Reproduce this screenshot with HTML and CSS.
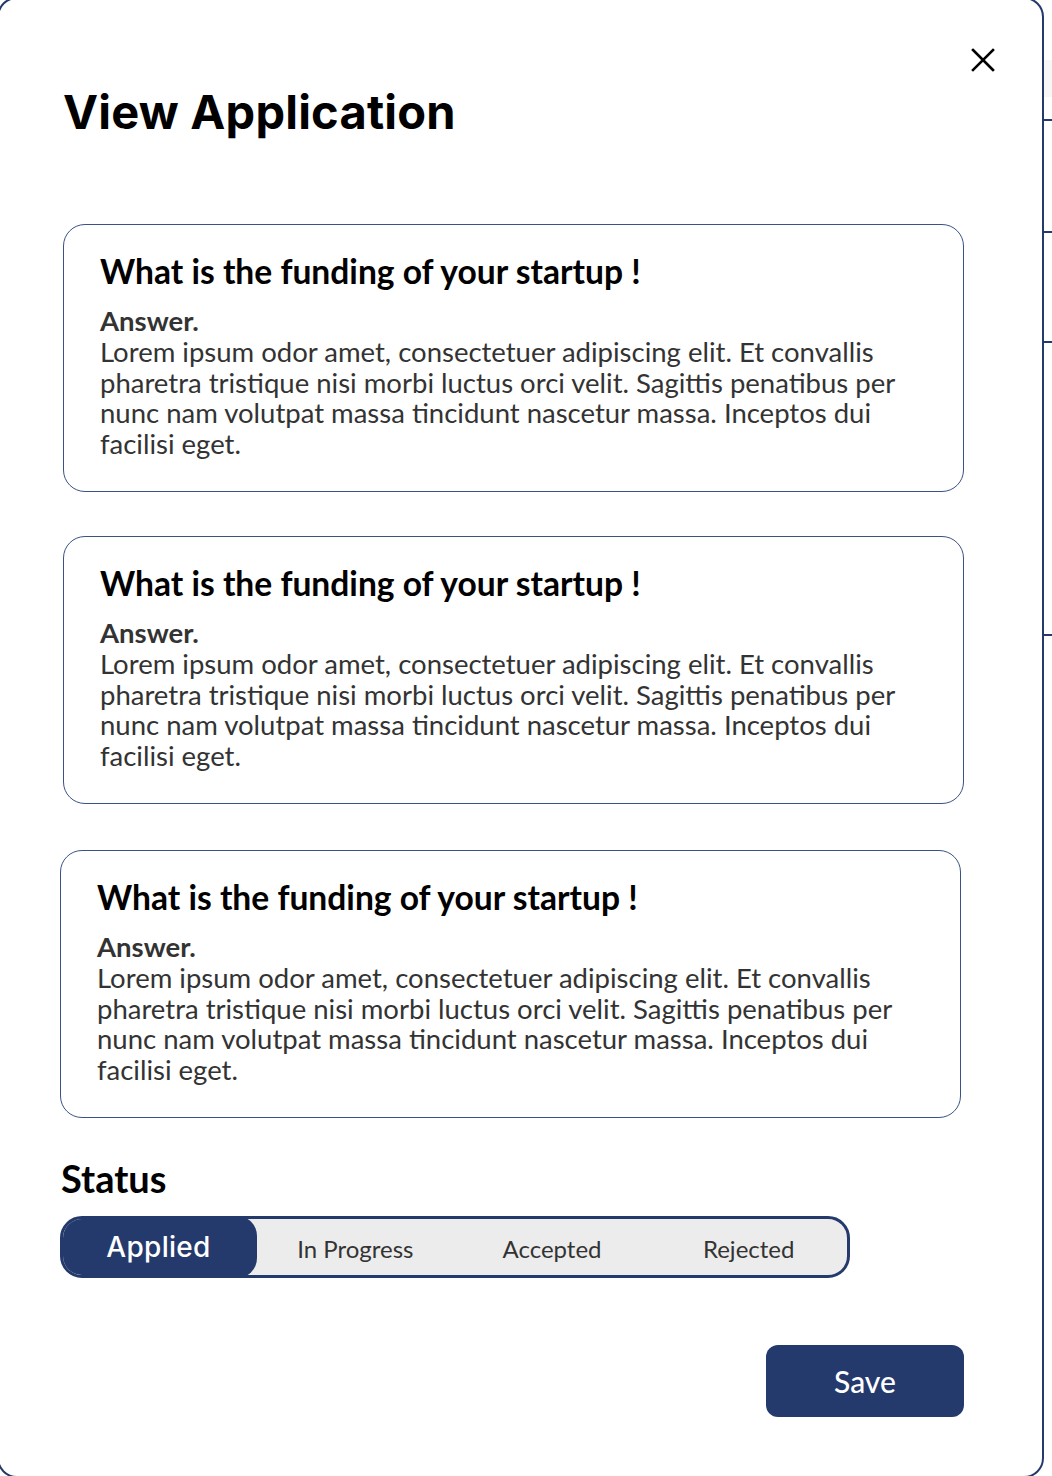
FILE: index.html
```html
<!DOCTYPE html>
<html lang="en">
<head>
<meta charset="utf-8">
<title>View Application</title>
<link rel="stylesheet" href="styles.css">
</head>
<body>
<div class="page">
  <div class="modal">
    <div class="modal-header">
      <h1 class="modal-title">View Application</h1>
      <button class="close-btn" aria-label="Close">
        <svg width="24" height="24" viewBox="0 0 24 24" fill="none" stroke="#000" stroke-width="2.6" stroke-linecap="square">
          <path d="M2 2 L22 22 M22 2 L2 22"/>
        </svg>
      </button>
    </div>

    <div class="cards">
      <div class="card">
        <h2 class="question">What is the funding of your startup !</h2>
        <div class="answer-label">Answer.</div>
        <p class="answer">Lorem ipsum odor amet, consectetuer adipiscing elit. Et convallis pharetra tristique nisi morbi luctus orci velit. Sagittis penatibus per nunc nam volutpat massa tincidunt nascetur massa. Inceptos dui facilisi eget.</p>
      </div>
      <div class="card">
        <h2 class="question">What is the funding of your startup !</h2>
        <div class="answer-label">Answer.</div>
        <p class="answer">Lorem ipsum odor amet, consectetuer adipiscing elit. Et convallis pharetra tristique nisi morbi luctus orci velit. Sagittis penatibus per nunc nam volutpat massa tincidunt nascetur massa. Inceptos dui facilisi eget.</p>
      </div>
      <div class="card card-shift">
        <h2 class="question">What is the funding of your startup !</h2>
        <div class="answer-label">Answer.</div>
        <p class="answer">Lorem ipsum odor amet, consectetuer adipiscing elit. Et convallis pharetra tristique nisi morbi luctus orci velit. Sagittis penatibus per nunc nam volutpat massa tincidunt nascetur massa. Inceptos dui facilisi eget.</p>
      </div>
    </div>

    <h3 class="status-title">Status</h3>
    <div class="segmented">
      <div class="seg seg-active">Applied</div>
      <div class="seg">In Progress</div>
      <div class="seg">Accepted</div>
      <div class="seg">Rejected</div>
    </div>

    <div class="actions">
      <button class="save-btn">Save</button>
    </div>
  </div>

  <div class="backdrop-strip">
    <div class="strip-block"></div>
    <div class="strip-tick tick-1"></div>
    <div class="strip-tick tick-2"></div>
    <div class="strip-tick tick-3"></div>
    <div class="strip-tick tick-4"></div>
  </div>
</div>
</body>
</html>
```

FILE: styles.css
```css
* { box-sizing: border-box; }

html, body {
  margin: 0;
  padding: 0;
  background: #ffffff;
  overflow: hidden;
}

body {
  width: 1052px;
  height: 1476px;
  font-family: "Lato", "Open Sans", sans-serif;
  color: #000;
}

.page {
  display: flex;
  align-items: flex-start;
  height: 1476px;
  overflow: hidden;
}

.modal {
  flex: 0 0 auto;
  width: 1047px;
  height: 1481px;
  margin-left: -3px;
  margin-top: -3px;
  border: 2px solid #253a6c;
  border-radius: 20px;
  background: #fff;
  padding: 49px 47px 0 64px;
}

.modal-header {
  display: flex;
  justify-content: space-between;
  align-items: flex-start;
}

.modal-title {
  margin: 35px 0 0 0;
  font-family: "Inter", "Lato", sans-serif;
  font-weight: 700;
  font-size: 47px;
  line-height: 58px;
  letter-spacing: 0.2px;
  color: #000;
}

.close-btn {
  border: 0;
  background: transparent;
  padding: 0;
  width: 24px;
  height: 24px;
  display: flex;
}

.cards {
  margin-top: 83px;
  display: flex;
  flex-direction: column;
  gap: 44px;
}

.card {
  width: 901px;
  height: 268px;
  border: 1.5px solid #3b5284;
  border-radius: 22px;
  padding: 26px 40px 0 36px;
}

.card-shift {
  margin-left: -3px;
  margin-top: 2px;
}

.question {
  margin: 0;
  font-family: "Lato", sans-serif;
  font-weight: 700;
  font-size: 33.6px;
  line-height: 40px;
  color: #000;
}

.answer-label {
  margin-top: 14px;
  font-weight: 700;
  font-size: 27.5px;
  line-height: 32px;
  color: #333333;
}

.answer {
  margin: 0;
  font-weight: 400;
  font-size: 27.5px;
  line-height: 30.7px;
  color: #333333;
}

.status-title {
  margin: 37px 0 0 -2px;
  font-family: "Lato", sans-serif;
  font-weight: 700;
  font-size: 38px;
  line-height: 46px;
  color: #000;
}

.segmented {
  margin: 15px 0 0 -3px;
  width: 790px;
  height: 62px;
  display: flex;
  border: 3px solid #253a6c;
  border-radius: 22px;
  background: #ececec;
  overflow: hidden;
}

.seg {
  flex: 1 1 0;
  display: flex;
  align-items: center;
  justify-content: center;
  font-family: "Lato", sans-serif;
  font-size: 24px;
  color: #333333;
  padding-top: 2px;
}

.seg-active {
  margin: -3px 0 -3px -3px;
  flex: 0 0 197px;
  background: #253a6c;
  color: #fff;
  border-radius: 20px;
  font-family: "Inter", "Lato", sans-serif;
  font-weight: 500;
  font-size: 28px;
  letter-spacing: 0.3px;
  padding-top: 0;
}

.actions {
  width: 901px;
  display: flex;
  justify-content: flex-end;
  margin-top: 67px;
}

.save-btn {
  width: 198px;
  height: 72px;
  border: 0;
  border-radius: 12px;
  background: #253a6c;
  color: #fff;
  font-family: "Lato", sans-serif;
  font-weight: 500;
  font-size: 30px;
  padding: 0;
}

.backdrop-strip {
  flex: 0 0 8px;
  display: flex;
  flex-direction: column;
}

.strip-block {
  height: 37px;
  margin-top: 60px;
  background: #f7f7f7;
}

.strip-tick {
  height: 2px;
  background: #253a6c;
}

.tick-1 { margin-top: 22px; }
.tick-2 { margin-top: 110px; }
.tick-3 { margin-top: 108px; }
.tick-4 { margin-top: 291px; }
```
